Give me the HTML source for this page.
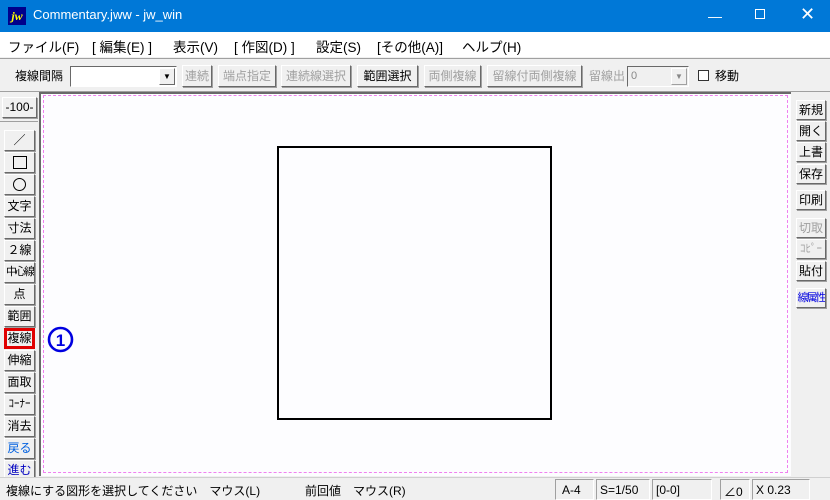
<!DOCTYPE html><html><head><style>
*{margin:0;padding:0;box-sizing:border-box}
body{width:830px;height:500px;overflow:hidden;background:#f0f0f0;font-family:"Liberation Sans","Noto Sans CJK JP",sans-serif;position:relative;font-size:13px}
.a{position:absolute}
.title{left:0;top:0;width:830px;height:32px;background:#0078d7;color:#fff}
.menu{left:0;top:32px;width:830px;height:25px;background:#fff;font-size:13.5px}
.btn{position:absolute;background:#f0f0f0;border:1px solid;border-color:#fff #696969 #696969 #fff;box-shadow:1px 1px 0 #a0a0a0;text-align:center;font-size:12px;line-height:19px;color:#000;white-space:nowrap;overflow:hidden}
.dis{color:#a0a0a0}
.lb{left:4px;width:31px;height:21px}
.rb{left:796px;width:30px;height:20px}
.sq{letter-spacing:-2px;font-size:11px}
</style></head><body>
<div class="a title">
 <div class="a" style="left:8px;top:7px;width:18px;height:18px;background:#00008b;color:#ff0;font:bold italic 12px 'Liberation Serif',serif;line-height:18px;text-align:center">jw</div>
 <div class="a" style="left:33px;top:7px;font-size:13px">Commentary.jww - jw_win</div>
 <div class="a" style="left:708px;top:8px;font-size:14px">&#8212;</div>
 <div class="a" style="left:755px;top:9px;width:10px;height:10px;border:1px solid #fff"></div>
 <div class="a" style="left:800px;top:4px;font-size:18px">&#x2715;</div>
</div>
<div class="a menu">
 <span class="a" style="left:8px;top:4px">ファイル(F)</span>
 <span class="a" style="left:92px;top:4px">[ 編集(E) ]</span>
 <span class="a" style="left:173px;top:4px">表示(V)</span>
 <span class="a" style="left:234px;top:4px">[ 作図(D) ]</span>
 <span class="a" style="left:316px;top:4px">設定(S)</span>
 <span class="a" style="left:377px;top:4px">[その他(A)]</span>
 <span class="a" style="left:462px;top:4px">ヘルプ(H)</span>
</div>
<div class="a" style="left:0;top:58px;width:830px;height:1px;background:#a0a0a0"></div>
<span class="a" style="left:15px;top:67px;font-size:12px">複線間隔</span>
<div class="a" style="left:70px;top:66px;width:107px;height:21px;background:#fff;border:1px solid;border-color:#696969 #fff #fff #696969"><div class="a" style="right:1px;top:1px;width:16px;height:17px;background:#f0f0f0;border:1px solid;border-color:#fff #696969 #696969 #fff;font-size:8px;line-height:16px;text-align:center">▼</div></div>
<div class="btn dis" style="left:182px;top:65px;width:30px;height:22px;line-height:20px">連続</div>
<div class="btn dis" style="left:218px;top:65px;width:58px;height:22px;line-height:20px">端点指定</div>
<div class="btn dis" style="left:281px;top:65px;width:70px;height:22px;line-height:20px">連続線選択</div>
<div class="btn" style="left:357px;top:65px;width:61px;height:22px;line-height:20px">範囲選択</div>
<div class="btn dis" style="left:424px;top:65px;width:57px;height:22px;line-height:20px">両側複線</div>
<div class="btn dis" style="left:487px;top:65px;width:95px;height:22px;line-height:20px">留線付両側複線</div>
<span class="a dis" style="left:589px;top:67px;font-size:12px">留線出</span>
<div class="a" style="left:627px;top:66px;width:62px;height:21px;background:#f0f0f0;border:1px solid;border-color:#696969 #fff #fff #696969;font-size:11px;color:#888;padding-left:3px;line-height:18px">0<div class="a" style="right:1px;top:1px;width:16px;height:17px;border:1px solid;border-color:#fff #a0a0a0 #a0a0a0 #fff;font-size:8px;line-height:16px;text-align:center">▼</div></div>
<div class="a" style="left:698px;top:70px;width:11px;height:11px;background:#fff;border:1px solid #333"></div>
<span class="a" style="left:715px;top:67px;font-size:12px">移動</span>
<div class="a" style="left:0;top:91px;width:830px;height:1px;background:#a0a0a0"></div>
<div class="a" style="left:39px;top:92px;width:752px;height:384px;background:#fdfdff;border-left:2px solid #696969;border-top:2px solid #696969"></div>
<div class="a" style="left:43px;top:95px;width:745px;height:378px;border:1px dashed #f080f0"></div>
<div class="a" style="left:277px;top:146px;width:275px;height:274px;border:2px solid #000"></div>
<svg class="a" style="left:47px;top:326px" width="27" height="27"><circle cx="13.5" cy="13.5" r="11.5" fill="none" stroke="#0000e0" stroke-width="2.6"/><text x="13.5" y="20" text-anchor="middle" font-family="Liberation Sans" font-weight="bold" font-size="17" fill="#0000e0">1</text></svg>
<div class="btn" style="left:2px;top:97px;width:35px;height:21px;font-size:12px">-100-</div>
<div class="a" style="left:0;top:121px;width:38px;height:1px;background:#a0a0a0"></div>
<div class="btn lb" style="top:130px">&#xFF0F;</div>
<div class="btn lb" style="top:152px"><div style="margin:3px auto;width:14px;height:13px;border:1px solid #000"></div></div>
<div class="btn lb" style="top:174px"><div style="margin:3px auto;width:13px;height:13px;border:1px solid #000;border-radius:50%"></div></div>
<div class="btn lb" style="top:196px">文字</div>
<div class="btn lb" style="top:218px">寸法</div>
<div class="btn lb" style="top:240px">２線</div>
<div class="btn lb sq" style="top:262px">中心線</div>
<div class="btn lb" style="top:284px">点</div>
<div class="btn lb" style="top:306px">範囲</div>
<div class="btn lb" style="top:328px;border:3px solid #e00000;line-height:15px;box-shadow:none">複線</div>
<div class="btn lb" style="top:350px">伸縮</div>
<div class="btn lb" style="top:372px">面取</div>
<div class="btn lb" style="top:394px;font-size:11px">ｺｰﾅｰ</div>
<div class="btn lb" style="top:416px">消去</div>
<div class="btn lb" style="top:438px;color:#0060e0">戻る</div>
<div class="btn lb" style="top:460px;color:#0000c0">進む</div>
<div class="btn rb" style="top:100px">新規</div>
<div class="btn rb" style="top:121px">開く</div>
<div class="btn rb" style="top:142px">上書</div>
<div class="btn rb" style="top:164px">保存</div>
<div class="btn rb" style="top:190px">印刷</div>
<div class="btn rb dis" style="top:218px">切取</div>
<div class="btn rb dis" style="top:239px;font-size:11px">ｺﾋﾟｰ</div>
<div class="btn rb" style="top:261px">貼付</div>
<div class="btn rb sq" style="top:288px;color:#0000e0">線属性</div>
<div class="a" style="left:0;top:477px;width:830px;height:23px;background:#f0f0f0;border-top:1px solid #d0d0d0;font-size:12px">
 <span class="a" style="left:6px;top:4px">複線にする図形を選択してください　マウス(L)</span>
 <span class="a" style="left:305px;top:4px">前回値　マウス(R)</span>
 <div class="a" style="left:555px;top:1px;width:39px;height:21px;border:1px solid;border-color:#a0a0a0 #fff #fff #a0a0a0;padding:3px 6px">A-4</div>
 <div class="a" style="left:596px;top:1px;width:54px;height:21px;border:1px solid;border-color:#a0a0a0 #fff #fff #a0a0a0;padding:3px 3px">S=1/50</div>
 <div class="a" style="left:652px;top:1px;width:60px;height:21px;border:1px solid;border-color:#a0a0a0 #fff #fff #a0a0a0;padding:3px 3px">[0-0]</div>
 <div class="a" style="left:720px;top:1px;width:30px;height:21px;border:1px solid;border-color:#a0a0a0 #fff #fff #a0a0a0;padding:3px 3px">∠0</div>
 <div class="a" style="left:752px;top:1px;width:58px;height:21px;border:1px solid;border-color:#a0a0a0 #fff #fff #a0a0a0;padding:3px 3px">X 0.23</div>
</div>
</body></html>
